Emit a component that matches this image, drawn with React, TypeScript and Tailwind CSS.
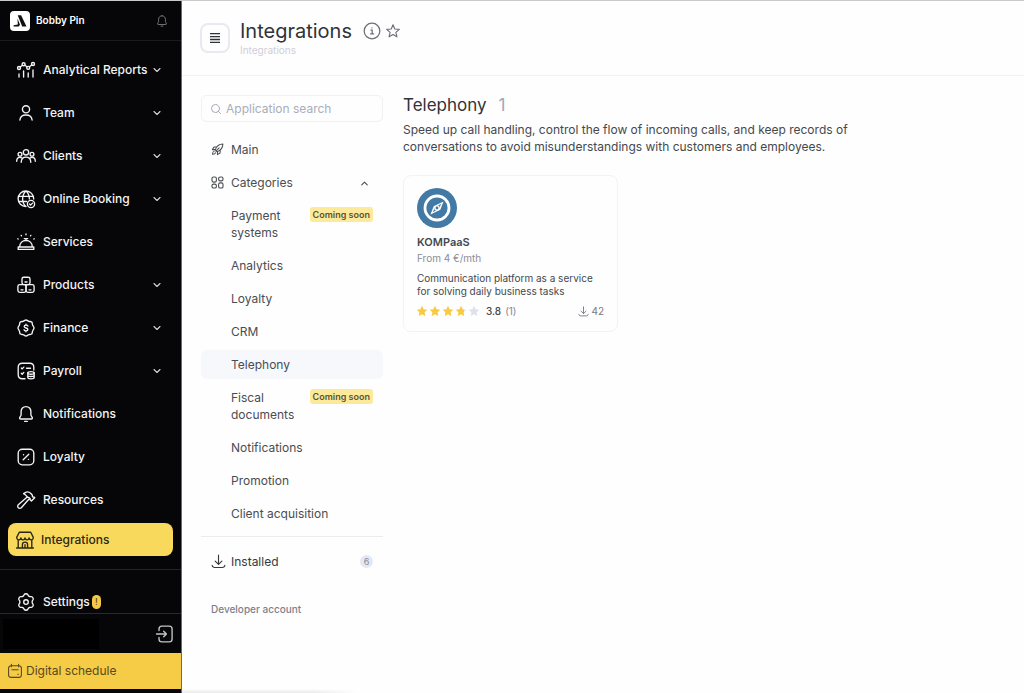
import type { ReactNode } from "react";
import { ChevronDown, ChevronUp, Search } from "lucide-react";

function Glyph({ children, className = "size-5" }: { children: ReactNode; className?: string }) {
  return (
    <svg
      viewBox="0 0 20 20"
      fill="none"
      stroke="currentColor"
      strokeWidth="1.35"
      strokeLinecap="round"
      strokeLinejoin="round"
      aria-hidden="true"
      className={`shrink-0 ${className}`}
    >
      {children}
    </svg>
  );
}

const BellShape = (
  <>
    <path d="M10 2.600c-3 0-4.900 2.200-4.900 5v3.100c0 1.500-1.500 2.400-1.500 3.500 0 .5.4.8.9.8h11c.5 0 .9-.3.9-.8 0-1.100-1.500-2-1.500-3.500V7.600c0-2.800-1.900-5-4.900-5z" />
    <path d="M8.600 17.300h2.800" />
  </>
);

const icons = {
  reports: (
    <Glyph>
      <circle cx="3" cy="8" r="1.500" />
      <circle cx="7.600" cy="4.200" r="1.500" />
      <circle cx="12.200" cy="7.800" r="1.500" />
      <circle cx="17" cy="4" r="1.500" />
      <path d="M4.200 7l2.200-1.800M8.800 5.200l2.200 1.600M13.400 6.800l2.400-1.800M3 14v3M7.600 11v6M12.200 13v4M17 10v7" />
    </Glyph>
  ),
  team: (
    <Glyph>
      <circle cx="10" cy="6.300" r="3.600" />
      <path d="M3.900 17c.3-3.200 2.700-5 6.100-5s5.800 1.800 6.100 5" />
    </Glyph>
  ),
  clients: (
    <Glyph>
      <circle cx="10" cy="6.300" r="2.700" />
      <circle cx="4" cy="8.200" r="1.900" />
      <circle cx="16" cy="8.200" r="1.900" />
      <path d="M5.200 16.300c.1-3.400 2-5.200 4.800-5.200s4.700 1.800 4.800 5.200M.7 15.200c0-2.500 1.200-3.800 3.300-3.800.8 0 1.500.2 2 .6M19.300 15.200c0-2.500-1.200-3.800-3.300-3.800-.8 0-1.500.2-2 .6" />
    </Glyph>
  ),
  booking: (
    <Glyph>
      <path d="M10 17.600A7.800 7.800 0 1 1 17.700 10M2.700 7.300h14.600M2.700 12.500h8M10 2.100C7.600 4.300 6.600 7 6.600 9.900s1 5.500 3.400 7.700M10 2.100c2.400 2.200 3.400 4.900 3.400 7.800" />
      <circle cx="15" cy="15" r="3.600" />
      <path d="M13.500 15l1.100 1.100 1.900-2" />
    </Glyph>
  ),
  services: (
    <Glyph>
      <path d="M2.200 15h15.600v2.400H2.200zM3.700 14.800c0-4 2.800-6.300 6.300-6.300s6.300 2.300 6.300 6.300M10 8.300V6.600M8.300 6.600h3.400M10 2v.7M5.200 3.400l.3.400M14.800 3.400l-.3.400M1.800 6.800l.4.200M18.200 6.800l-.4.200" />
    </Glyph>
  ),
  products: (
    <Glyph>
      <rect x="6" y="2.200" width="8" height="7.400" rx="1.800" />
      <rect x="1.900" y="9.600" width="8.100" height="7.800" rx="1.800" />
      <rect x="10" y="9.600" width="8.100" height="7.800" rx="1.800" />
      <path d="M9 7h2M5 14.800h2M13 14.800h2" />
    </Glyph>
  ),
  finance: (
    <Glyph>
      <path d="M10 2c1.200 0 1.700 1 2.800 1.300 1.100.4 2.100-.1 2.900.8.800.8.400 1.800.9 2.900.4 1.100 1.400 1.700 1.400 3s-1 1.900-1.400 3c-.5 1.100-.1 2.100-.9 2.900-.8.900-1.800.4-2.900.8C11.700 17 11.200 18 10 18s-1.700-1-2.800-1.300c-1.100-.4-2.100.1-2.900-.8-.8-.8-.4-1.800-.9-2.900C3 11.900 2 11.300 2 10s1-1.900 1.400-3c.5-1.100.1-2.100.9-2.900.8-.9 1.800-.4 2.900-.8C8.300 3 8.800 2 10 2z" />
      <path d="M11.900 8.100c-.3-.7-1-1-1.900-1-1 0-1.800.5-1.800 1.400 0 2 3.700 1 3.700 3 0 .9-.8 1.400-1.900 1.400-.9 0-1.700-.4-2-1.100M10 6.200v.9M10 12.900v.9" />
    </Glyph>
  ),
  payroll: (
    <Glyph>
      <path d="M9 17.700H6.300c-2.700 0-4.100-1.300-4.100-4.100V6.300c0-2.700 1.400-4.100 4.100-4.100h7.400c2.700 0 4.100 1.400 4.100 4.100V9M5.300 7l.9.900 1.600-1.800M5.300 12.300l.9.900 1.600-1.800M10.500 7.200h4" />
      <ellipse cx="15" cy="11.900" rx="3.200" ry="1.300" />
      <path d="M11.800 11.900v4.700c0 .8 1.400 1.300 3.200 1.300s3.200-.5 3.200-1.300v-4.700M11.800 14.200c0 .7 1.400 1.300 3.200 1.300s3.200-.6 3.200-1.300" />
    </Glyph>
  ),
  notifications: <Glyph>{BellShape}</Glyph>,
  loyalty: (
    <Glyph>
      <rect x="2.200" y="2.200" width="15.600" height="15.600" rx="4" />
      <path d="M7.200 12.800l5.600-5.600M7.500 7.700h.1M12.400 12.300h.1" />
    </Glyph>
  ),
  resources: (
    <Glyph>
      <path d="M7.600 3.600c2.600-2.100 5.400-2 7.300-.1l1.500 1.700v1.400l.5.500h1.200l.6.600-3.300 3.300-1.300-1.300V8.600l-1.200-1.200-1.300-.1-2.400-2.700zM10.900 7.200L2.300 14.700a2.100 2.100 0 0 0 3 3l7.500-8.500" />
    </Glyph>
  ),
  integrations: (
    <Glyph>
      <path d="M4.300 2.200h11.400l2.500 4.900c.2 1.800-.7 2.700-2 2.700-1.200 0-2.100-.8-2.100-2 0 1.200-.8 2-2 2s-2.100-.8-2.100-2c0 1.200-.9 2-2.100 2s-2-.8-2-2c0 1.200-.9 2-2.100 2-1.300 0-2.200-.9-2-2.700zM3.200 9.800V18M16.800 9.800V18M1.600 18h16.800M7.400 18v-3.300c0-1.600 1-2.600 2.600-2.600s2.600 1 2.600 2.600V18M10 14.700V18" />
    </Glyph>
  ),
  settings: (
    <Glyph>
      <path d="M8.300 2.500c.7-1 2.700-1 3.400 0l.8 1.400 1.200.7h1.700c1.200.1 2.200 1.900 1.700 3L16.200 9v2l.9 1.400c.5 1.100-.5 2.900-1.700 3h-1.700l-1.200.7-.8 1.400c-.7 1-2.700 1-3.400 0l-.8-1.400-1.200-.7H4.600c-1.200-.1-2.200-1.900-1.700-3L3.800 11V9l-.9-1.400c-.5-1.100.5-2.900 1.700-3h1.700l1.200-.7z" />
      <circle cx="10" cy="10" r="2.300" />
    </Glyph>
  ),
};

const navItems: { icon: keyof typeof icons; label: string; expandable?: boolean }[] = [
  { icon: "reports", label: "Analytical Reports", expandable: true },
  { icon: "team", label: "Team", expandable: true },
  { icon: "clients", label: "Clients", expandable: true },
  { icon: "booking", label: "Online Booking", expandable: true },
  { icon: "services", label: "Services" },
  { icon: "products", label: "Products", expandable: true },
  { icon: "finance", label: "Finance", expandable: true },
  { icon: "payroll", label: "Payroll", expandable: true },
  { icon: "notifications", label: "Notifications" },
  { icon: "loyalty", label: "Loyalty" },
  { icon: "resources", label: "Resources" },
];

const categories: { label: string; soon?: boolean; active?: boolean }[] = [
  { label: "Payment systems", soon: true },
  { label: "Analytics" },
  { label: "Loyalty" },
  { label: "CRM" },
  { label: "Telephony", active: true },
  { label: "Fiscal documents", soon: true },
  { label: "Notifications" },
  { label: "Promotion" },
  { label: "Client acquisition" },
];

function Sidebar() {
  return (
    <aside className="flex w-[182px] shrink-0 flex-col border-r border-[#6b6b6e] bg-[#060608] text-white">
      <div className="flex h-10 shrink-0 items-center border-b border-[#1b1b1e] pr-3 pl-[10px]">
        <span className="flex size-5 items-center justify-center rounded bg-white">
          <svg viewBox="0 0 20 20" className="size-5" aria-hidden="true">
            <path d="M7.700 4.300h3.400l5.400 11.200h-4.300z" fill="#111" />
            <path d="M7.500 7.500l2.500 6.200-1.200 1.800H3.600v-1.200l4.200-.8z" fill="#111" />
          </svg>
        </span>
        <span className="ml-[6px] text-[10px] font-semibold">Bobby Pin</span>
        <button type="button" aria-label="Alerts" className="ml-auto text-[#77777c]">
          <Glyph className="size-[14px]">{BellShape}</Glyph>
        </button>
      </div>
      <nav className="min-h-0 flex-1 overflow-hidden pt-[7px]">
        {navItems.map((item) => (
          <button
            key={item.label}
            type="button"
            className="flex h-[43px] w-full items-center pr-[18px] pl-4 text-left text-xs font-medium text-[#f4f4f5]"
          >
            {icons[item.icon]}
            <span className="ml-[7px] whitespace-nowrap">{item.label}</span>
            {item.expandable && <ChevronDown className="ml-auto size-3 text-[#d4d4d8]" strokeWidth={2.2} />}
          </button>
        ))}
        <a
          href="#integrations"
          aria-current="page"
          className="mx-2 mt-[2px] flex h-[33px] items-center rounded-lg bg-[#f8d95c] pl-[7px] text-xs font-medium text-[#2b2712]"
        >
          {icons.integrations}
          <span className="ml-[6px]">Integrations</span>
        </a>
        <div className="mt-[13px] border-t border-[#232326] pt-[10px]">
          <a href="#settings" className="flex h-[43px] items-center pl-4 text-xs font-medium text-[#f4f4f5]">
            {icons.settings}
            <span className="ml-[7px]">Settings</span>
            <span className="ml-[2px] flex h-[14px] w-[9px] items-center justify-center rounded-full bg-[#f6c945] text-[9px] text-[#5c4a10]">
              !
            </span>
          </a>
        </div>
      </nav>
      <div className="flex h-10 shrink-0 items-center justify-between border-t border-[#2a2a2d] pr-[6px] pl-[3px]">
        <div className="h-[30px] w-24 bg-black" />
        <button type="button" aria-label="Log out" className="text-[#c4c4ca]">
          <Glyph>
            <path d="M4 6.500V5c0-1.900 1-2.900 2.900-2.900h7.300c1.900 0 2.900 1 2.900 2.900v10c0 1.900-1 2.900-2.900 2.900H6.900C5 17.900 4 16.900 4 15v-1.500M1.500 10h9.800M8.700 7.200l2.700 2.800-2.700 2.800" />
          </Glyph>
        </button>
      </div>
      <a href="#schedule" className="mb-1 flex h-9 shrink-0 items-center bg-[#f6cb45] pl-[7px] text-xs text-[#57491f]">
        <Glyph className="size-4">
          <path d="M2 6.500c0-2 1.300-3 3.500-3h9c2.200 0 3.500 1 3.500 3V15c0 2-1.300 3-3.500 3h-9C3.300 18 2 17 2 15zM5.500 1.700v3M14.500 1.700v3M6 8.500h8M13.500 14h.7" />
        </Glyph>
        <span className="ml-[3px]">Digital schedule</span>
      </a>
    </aside>
  );
}

const rowClass = "flex w-full items-start rounded-md py-[6px] pl-[10px] pr-[10px] text-left text-xs leading-[17px]";

function Filters() {
  return (
    <div className="w-[182px] shrink-0 text-[#4a4d52]">
      <label className="flex h-[27px] items-center gap-1 rounded-md border border-[#f0f0f5] pl-2">
        <Search className="size-3 text-[#a5a9b5]" strokeWidth={2} />
        <input
          type="search"
          aria-label="Application search"
          placeholder="Application search"
          className="min-w-0 flex-1 bg-transparent text-xs outline-none placeholder:text-[#a9adb9]"
        />
      </label>
      <nav className="mt-[13px] flex flex-col gap-1">
        <button type="button" className={rowClass}>
          <Glyph className="mt-[2px] size-[13px]">
            <path
              strokeWidth="1.600"
              d="M6.500 10.500C8.500 5 12.500 1.800 18.300 1.700 18.200 7.500 15 11.500 9.500 13.500zM6.800 9.800l-4.700.4 2.500-4.100 4.500-.4M10.200 13.200l-.4 4.700 4.100-2.500.4-4.500M4.800 12.500c-1.800.6-2.400 2.500-2.500 4.900 2.400-.1 4.300-.7 4.900-2.500M7.500 12.500l5-5"
            />
          </Glyph>
          <span className="ml-[7px]">Main</span>
        </button>
        <button type="button" aria-expanded="true" className={rowClass}>
          <Glyph className="mt-[2px] size-[13px]">
            <g strokeWidth="1.700">
              <rect x="1.500" y="1.500" width="6.800" height="8" rx="2.500" />
              <rect x="11.700" y="1.500" width="6.800" height="6" rx="2.500" />
              <rect x="1.500" y="12.500" width="6.800" height="6" rx="2.500" />
              <rect x="11.700" y="10.500" width="6.800" height="8" rx="2.500" />
            </g>
          </Glyph>
          <span className="ml-[7px]">Categories</span>
          <ChevronUp className="mt-1 mr-[3px] ml-auto size-[11px]" strokeWidth={2.4} />
        </button>
        {categories.map((c) => (
          <button key={c.label} type="button" className={`${rowClass} ${c.active ? "bg-[#f6f8fc]" : ""}`}>
            <span className={`ml-5 ${c.soon ? "w-[70px]" : ""}`}>{c.label}</span>
            {c.soon && (
              <span className="ml-auto rounded-[3px] bg-[#fce99a] px-[3px] text-[9px] leading-[15px] font-semibold whitespace-nowrap text-[#5a5436]">
                Coming soon
              </span>
            )}
          </button>
        ))}
      </nav>
      <div className="mt-2 border-t border-[#ececf0] pt-[10px]">
        <button type="button" className={`${rowClass} text-[#36393d]`}>
          <Glyph className="mt-px size-[15px]">
            <path strokeWidth="1.500" d="M10 1.500v12M5.500 9.500l4.500 4.300 4.500-4.300M1.500 15c.3 2 1.300 3 3.500 3h10c2.200 0 3.200-1 3.500-3" />
          </Glyph>
          <span className="ml-[5px]">Installed</span>
          <span className="mt-[2px] ml-auto size-[13px] rounded-full bg-[#e4e8f2] text-center text-[9px] leading-[13px] text-[#858a99]">
            6
          </span>
        </button>
      </div>
      <a href="#developer" className="mt-[25px] ml-[10px] block text-[10px] leading-4 font-medium text-[#7d808b]">
        Developer account
      </a>
    </div>
  );
}

const starPath = "M6 .8l1.600 3.400 3.700.5-2.700 2.600.7 3.700L6 9.200 2.700 11l.7-3.700L.7 4.700l3.700-.5z";

function Rating() {
  return (
    <span className="flex items-center gap-[1px]" role="img" aria-label="3.8 out of 5">
      {[1, 1, 1, 0.8, 0].map((fill, i) => (
        <svg key={i} viewBox="0 0 12 12" className="size-3">
          <defs>
            <linearGradient id={`star-${i}`}>
              <stop offset={fill} stopColor="#f8ca3f" />
              <stop offset={fill} stopColor="#dfe2ec" />
            </linearGradient>
          </defs>
          <path d={starPath} fill={`url(#star-${i})`} />
        </svg>
      ))}
    </span>
  );
}

function AppCard() {
  return (
    <article className="mt-5 w-[215px] rounded-lg border border-[#f3f3f7] p-[13px] pt-3 text-[#45484d]">
      <svg viewBox="0 0 40 40" className="size-10" aria-hidden="true">
        <circle cx="20" cy="20" r="20" fill="#437aa5" />
        <circle cx="20" cy="20" r="12" fill="none" stroke="#fff" strokeWidth="2.800" />
        <path d="M26.500 13.500l-3.200 8.300-9.800 4.700 3.200-8.300z" fill="#fff" />
        <path d="M24.200 15.800l-2.200 5-6.200 3.400 2.200-5z" fill="#437aa5" />
        <circle cx="20" cy="20" r="2.700" fill="#fff" />
        <circle cx="20" cy="20" r="1.400" fill="#437aa5" />
      </svg>
      <h3 className="mt-[6px] text-[11px] leading-4 font-semibold">KOMPaaS</h3>
      <p className="text-[10px] leading-4 text-[#8a8d97]">From 4 €/mth</p>
      <p className="mt-[6px] text-[10px] leading-[13px]">Communication platform as a service for solving daily business tasks</p>
      <div className="mt-[6px] flex items-center text-[10px] leading-[14px]">
        <span className="-ml-px">
          <Rating />
        </span>
        <span className="ml-[6px] font-medium">3.8</span>
        <span className="ml-1 text-[#858893]">(1)</span>
        <span className="ml-auto flex items-center gap-[2px] text-[#777b86]">
          <Glyph className="size-[11px]">
            <path strokeWidth="1.700" d="M10 1.500v12M5.500 9.500l4.500 4.300 4.500-4.300M1.500 15c.3 2 1.300 3 3.500 3h10c2.200 0 3.200-1 3.500-3" />
          </Glyph>
          42
        </span>
      </div>
    </article>
  );
}

export default function App() {
  return (
    <div className="flex h-screen border-t border-[#c9c9c9] bg-[#fefefe] font-['Inter',sans-serif]">
      <Sidebar />
      <div className="relative flex min-w-0 flex-1 flex-col overflow-hidden">
        <header className="flex h-[75px] shrink-0 items-center border-b border-[#f1f1f3] pl-[18px]">
          <button
            type="button"
            aria-label="Menu"
            className="flex size-[30px] items-center justify-center rounded-lg border-2 border-[#eae8f1] text-[#303338]"
          >
            <svg viewBox="0 0 12 12" className="size-3" stroke="currentColor" strokeWidth="1.300" aria-hidden="true">
              <path d="M1 1.700h10M1 4.600h10M1 7.500h10M1 10.400h10" />
            </svg>
          </button>
          <div className="ml-[10px]">
            <div className="flex items-center">
              <h1 className="text-xl leading-6 font-normal text-[#303338]">Integrations</h1>
              <button type="button" aria-label="Information" className="ml-[11px] text-[#6d6f78]">
                <Glyph className="size-[18px]">
                  <circle cx="10" cy="10" r="8.700" strokeWidth="1.400" />
                  <path d="M8.800 9h1.400v4.300M8.500 13.300h3.300M10 6.400v.2" strokeWidth="1.400" />
                </Glyph>
              </button>
              <button type="button" aria-label="Add to favourites" className="ml-1 text-[#6d6f78]">
                <Glyph className="size-4">
                  <path d="M10 2.300l2.200 5.200 5.700.5-4.300 3.700 1.300 5.600-4.900-3-4.900 3 1.300-5.600L2.100 8l5.700-.5z" strokeWidth="1.400" />
                </Glyph>
              </button>
            </div>
            <p className="text-[10px] leading-[14px] text-[#cfcfd9]">Integrations</p>
          </div>
        </header>
        <div className="flex min-h-0 flex-1 gap-5 pt-[19px] pr-5 pl-[19px]">
          <Filters />
          <main className="min-w-0 flex-1">
            <h2 className="flex gap-3 text-[17px] leading-5 font-normal text-[#303338]">
              Telephony <span className="text-[#a2a6b8]">1</span>
            </h2>
            <p className="mt-[6px] max-w-[460px] text-xs leading-[17px] text-[#45484d]">
              Speed up call handling, control the flow of incoming calls, and keep records of conversations to avoid
              misunderstandings with customers and employees.
            </p>
            <AppCard />
          </main>
        </div>
        <div className="absolute bottom-0 left-0 h-1 w-44 bg-gradient-to-t from-[#e9e9e9] to-transparent [mask-image:linear-gradient(to_right,black_75%,transparent)]" />
      </div>
    </div>
  );
}
